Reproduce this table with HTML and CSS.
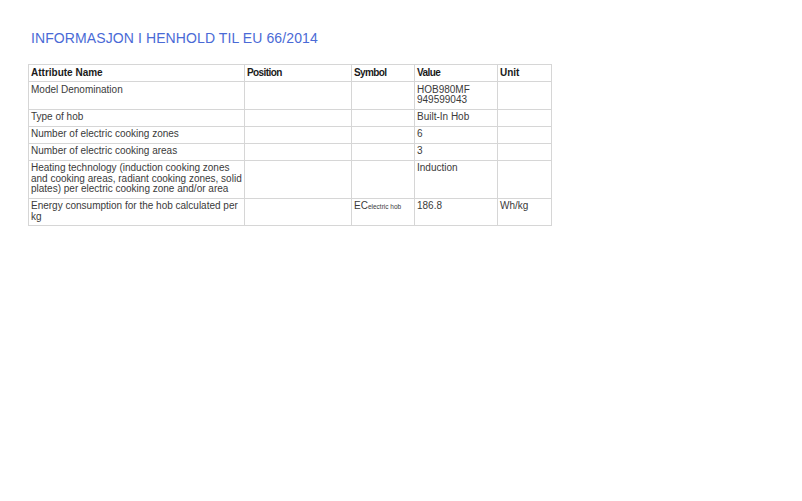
FILE: index.html
```html
<!DOCTYPE html>
<html>
<head>
<meta charset="utf-8">
<link rel="stylesheet" href="styles.css">
</head>
<body>
<div class="page">
  <h1 class="title">INFORMASJON I HENHOLD TIL EU 66/2014</h1>
  <table class="info">
    <colgroup>
      <col class="c1"><col class="c2"><col class="c3"><col class="c4"><col class="c5">
    </colgroup>
    <thead>
      <tr><th>Attribute Name</th><th class="cond">Position</th><th class="cond">Symbol</th><th class="cond">Value</th><th>Unit</th></tr>
    </thead>
    <tbody>
      <tr><td>Model Denomination</td><td></td><td></td><td>HOB980MF<br>949599043</td><td></td></tr>
      <tr><td>Type of hob</td><td></td><td></td><td>Built-In Hob</td><td></td></tr>
      <tr><td>Number of electric cooking zones</td><td></td><td></td><td>6</td><td></td></tr>
      <tr><td>Number of electric cooking areas</td><td></td><td></td><td>3</td><td></td></tr>
      <tr><td>Heating technology (induction cooking zones and cooking areas, radiant cooking zones, solid plates) per electric cooking zone and/or area</td><td></td><td></td><td>Induction</td><td></td></tr>
      <tr><td>Energy consumption for the hob calculated per kg</td><td></td><td>EC<span class="sub">electric hob</span></td><td>186.8</td><td>Wh/kg</td></tr>
    </tbody>
  </table>
</div>
</body>
</html>
```

FILE: styles.css
```css
html, body {
  margin: 0;
  padding: 0;
  background: #ffffff;
}

.page {
  padding: 30px 0 0 28px;
  font-family: "Liberation Sans", Arial, sans-serif;
  color: #3a3a3a;
}

.title {
  margin: 0 0 17px 3px;
  font-size: 14px;
  font-weight: normal;
  line-height: 17px;
  letter-spacing: 0.1px;
  color: #4a6ad6;
}

.info {
  border-collapse: collapse;
  table-layout: fixed;
  width: 524px;
  font-size: 10px;
  line-height: 10.5px;
}

.c1 { width: 216px; }
.c2 { width: 107px; }
.c3 { width: 63px; }
.c4 { width: 83px; }
.c5 { width: 54px; }

.info th,
.info td {
  border: 1px solid #d6d6d6;
  padding: 2.5px 2px 3px 2px;
  text-align: left;
  vertical-align: top;
}

.info th {
  font-weight: bold;
  color: #1a1a1a;
}

.info th.cond {
  letter-spacing: -0.6px;
}

.sub {
  font-size: 6.5px;
}
```
